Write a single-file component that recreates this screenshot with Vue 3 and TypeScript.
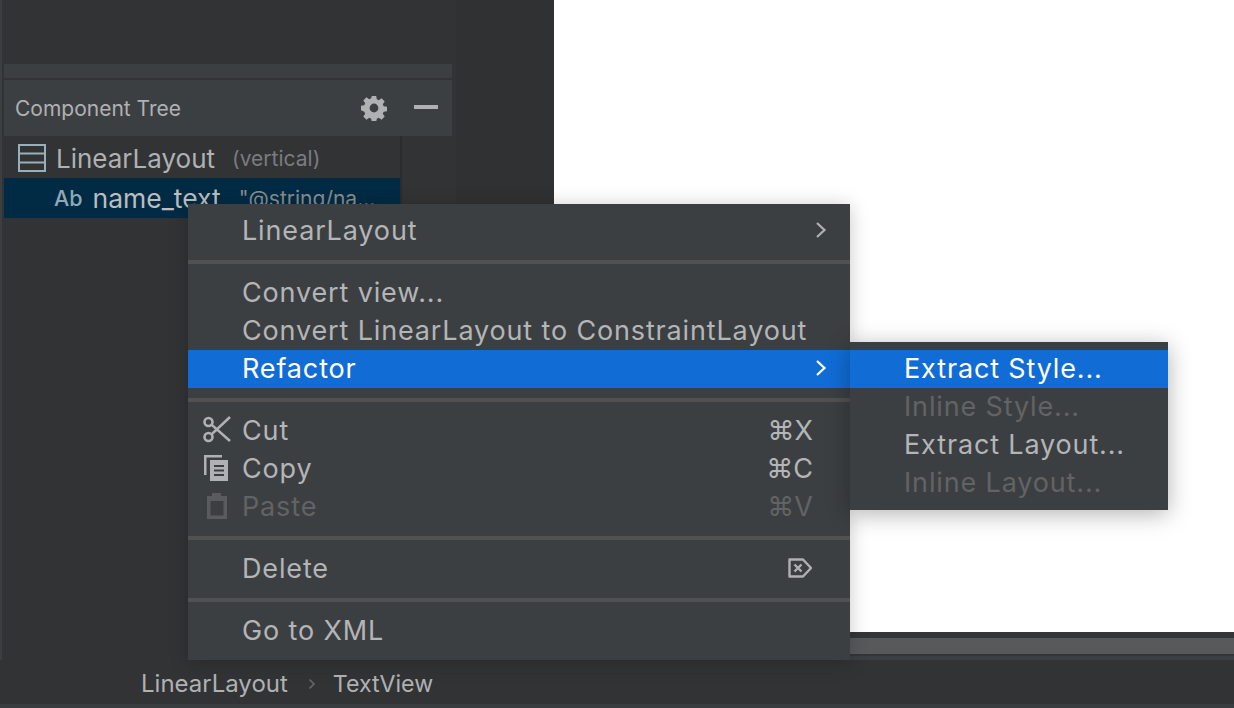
<script setup lang="ts">
interface Item { label?: string; sep?: boolean; sub?: boolean; active?: boolean; disabled?: boolean; icon?: string; key?: string; del?: boolean }
const items: Item[] = [
  { label: 'LinearLayout', sub: true },
  { sep: true },
  { label: 'Convert view...' },
  { label: 'Convert LinearLayout to ConstraintLayout' },
  { label: 'Refactor', sub: true, active: true },
  { sep: true },
  { label: 'Cut', icon: 'cut', key: '⌘X' },
  { label: 'Copy', icon: 'copy', key: '⌘C' },
  { label: 'Paste', icon: 'paste', key: '⌘V', disabled: true },
  { sep: true },
  { label: 'Delete', del: true },
  { sep: true },
  { label: 'Go to XML' },
]
const subItems: Item[] = [
  { label: 'Extract Style...', active: true },
  { label: 'Inline Style...', disabled: true },
  { label: 'Extract Layout...' },
  { label: 'Inline Layout...', disabled: true },
]
</script>

<template>
  <div class="app">
    <div class="main">
      <div class="left">
        <div class="strip"></div>
        <div class="header">
          <span class="title">Component Tree</span>
          <svg class="gear" width="26" height="26" viewBox="0 0 26 26">
            <path fill="#afb1b3" fill-rule="evenodd" d="M10.8 1h4.400l.6 3.300 2 .9 2.800-1.900 3.100 3.100-1.900 2.800.9 2 3.300.6v4.400l-3.300.6-.9 2 1.900 2.800-3.100 3.100-2.800-1.900-2 .9-.6 3.300h-4.400l-.6-3.300-2-.9-2.800 1.900-3.100-3.100 1.900-2.800-.9-2L0 15.200v-4.400l3.300-.6.9-2-1.900-2.800 3.100-3.100 2.800 1.900 2-.9zM13 8.600a4.400 4.400 0 1 0 0 8.800 4.400 4.400 0 0 0 0-8.800z" />
          </svg>
          <span class="minus"></span>
        </div>
        <div class="tree">
          <div class="row">
            <svg class="layout-icon" width="28" height="28" viewBox="0 0 28 28" fill="none" stroke="#9aafba" stroke-width="2">
              <rect x="1" y="1" width="26" height="26" />
              <path d="M1 9.500h26M1 18.500h26" />
            </svg>
            <span class="name">LinearLayout</span>
            <span class="hint">(vertical)</span>
          </div>
          <div class="row selected">
            <span class="ab">Ab</span>
            <span class="name">name_text</span>
            <span class="hint">"@string/na...</span>
          </div>
        </div>
      </div>
      <div class="right">
        <div class="canvas"></div>
        <div class="edge"></div>
        <div class="scrollbar"></div>
        <div class="edge2"></div>
      </div>
    </div>
    <div class="crumbs">
      <span>LinearLayout</span>
      <svg class="crumb-chev" width="10" height="14" viewBox="0 0 10 14" fill="none" stroke="#66686a" stroke-width="1.600"><path d="M2.500 2.500 7 7l-4.500 4.500" /></svg>
      <span class="crumb-last">TextView</span>
    </div>

    <div class="menu">
      <template v-for="(it, i) in items" :key="i">
        <div v-if="it.sep" class="sep"></div>
        <div v-else class="item" :class="{ active: it.active, disabled: it.disabled, low: i > 5 }">
          <svg v-if="it.icon === 'cut'" class="ico cut" width="28" height="28" viewBox="0 0 28 28" fill="none" stroke="#afb1b3" stroke-width="2.600">
            <circle cx="5.500" cy="7" r="4" />
            <circle cx="5.500" cy="22" r="4" />
            <path d="M8.500 9.600 27 26M8.500 19.400 27 2" />
          </svg>
          <svg v-if="it.icon === 'copy'" class="ico" width="28" height="28" viewBox="0 0 28 28">
            <path fill="#afb1b3" d="M1 1h18v2.500H3.500V21H1z" />
            <path fill="#afb1b3" fill-rule="evenodd" d="M7 6h18v21H7zM11 11v2h10v-2zM11 15.500v2h10v-2zM11 20v2h10v-2z" />
          </svg>
          <svg v-if="it.icon === 'paste'" class="ico" width="28" height="28" viewBox="0 0 28 28">
            <path fill="#5a5b5c" fill-rule="evenodd" d="M9 1h9v3h6v23H4V4h5zM7.500 9v14.500h13V9z" />
          </svg>
          <span class="label">{{ it.label }}</span>
          <span v-if="it.key" class="key">{{ it.key }}</span>
          <svg v-if="it.sub" class="chev" width="12" height="18" viewBox="0 0 12 18" fill="none" :stroke="it.active ? '#fff' : '#afb1b3'" stroke-width="2.200"><path d="M2 2l7.500 7L2 16" /></svg>
          <svg v-if="it.del" class="del" width="26" height="20" viewBox="0 0 26 20" fill="none" stroke="#afb1b3" stroke-width="2.400" stroke-linejoin="round">
            <path d="M2.500 1.500h13.500l8 8.500-8 8.500H2.500z" />
            <path d="M7.500 6.500l7 7M14.500 6.500l-7 7" />
          </svg>
        </div>
      </template>
    </div>

    <div class="submenu">
      <div v-for="s in subItems" :key="s.label" class="subitem" :class="{ active: s.active, disabled: s.disabled }">{{ s.label }}</div>
    </div>
  </div>
</template>

<style>
html, body { margin: 0; padding: 0; background: #323335; }
</style>

<style scoped>
.app {
  position: relative;
  width: 1234px;
  height: 708px;
  overflow: hidden;
  display: flex;
  flex-direction: column;
  background: #323335;
  font-family: Inter, "Liberation Sans", sans-serif;
  color: #afb1b3;
}
.main { display: flex; height: 660px; flex: none; }
.left {
  width: 554px;
  flex: none;
  box-sizing: border-box;
  padding: 64px 102px 0 2px;
  background: linear-gradient(90deg, #323335 0, #323335 454px, #2f3133 454px);
  border-left: 2px solid #3c3f41;
}
.strip { height: 14px; background: #3c3f41; margin-bottom: 2px; }
.header {
  height: 56px;
  background: #3c3f41;
  display: flex;
  align-items: center;
  box-sizing: border-box;
  padding: 0 14px 0 11px;
}
.title { font-size: 21px; flex: 1; color: #afb1b3; }
.gear { margin-right: 27px; }
.minus { width: 24px; height: 4px; background: #afb1b3; margin-bottom: 2px; }
.tree { width: 398px; height: 524px; box-sizing: border-box; border-right: 2px solid #2b2b2b; padding-top: 2px; }
.row {
  height: 40px;
  display: flex;
  align-items: center;
  box-sizing: border-box;
  white-space: nowrap;
  overflow: hidden;
}
.layout-icon { margin-left: 14px; margin-right: 10px; flex: none; }
.name { font-size: 26px; color: #afb1b3; margin-right: 17px; }
.hint { font-size: 21px; color: #7a7c7e; }
.selected { background: #012b44; }
.selected .name { color: #bbbdbf; margin-right: 18px; font-size: 26.500px; }
.selected .hint { color: #8a8c8e; }
.ab { font-size: 21.500px; font-weight: 500; color: #8fa8b5; margin-left: 50px; margin-right: 10px; }
.right { flex: 1; display: flex; flex-direction: column; }
.canvas { height: 632px; background: #fff; }
.edge { height: 6px; background: #333537; }
.scrollbar { height: 16px; background: #58595b; }
.edge2 { flex: 1; background: #3c3f41; border-top: 2px solid #333537; }
.crumbs {
  flex: 1;
  display: flex;
  align-items: center;
  padding: 3px 0 0 141px;
  font-size: 24px;
  background: #323335;
  border-bottom: 4px solid #3a3d3f;
  box-sizing: border-box;
  color: #afb1b3;
}
.crumb-chev { margin: 0 16px 0 19px; }
.crumb-last { font-size: 23.200px; }
.menu {
  position: absolute;
  left: 188px;
  top: 204px;
  width: 662px;
  height: 456px;
  box-sizing: border-box;
  padding-top: 8px;
  background: #3c3f41;
  box-shadow: 0 2px 18px rgba(0, 0, 0, 0.22);
  font-size: 27px;
  letter-spacing: 0.850px;
}
.sep { height: 4px; background: #515151; margin: 11px 0 9px; }
.sep:nth-child(2) { margin: 10px 0; }
.sep:nth-child(6) { margin: 10px 0 9px; }
.item {
  position: relative;
  height: 38px;
  display: flex;
  align-items: center;
  box-sizing: border-box;
  padding: 0 23px 2px 54px;
  color: #b3b5b7;
}
.item.low { padding-bottom: 0; }
.item .label { flex: 1; white-space: nowrap; }
.item.active { background: #116cd6; color: #fff; }
.item.disabled { color: #626364; }
.ico { position: absolute; left: 15px; top: 5px; }
.ico.cut { top: 4px; }
.key { letter-spacing: 0; margin-right: 14px; font-size: 27px; }
.del { margin-right: 14px; }
.submenu {
  position: absolute;
  left: 850px;
  top: 342px;
  width: 318px;
  height: 168px;
  box-sizing: border-box;
  padding-top: 8px;
  background: #3c3f41;
  box-shadow: 0 4px 22px rgba(0, 0, 0, 0.3);
  font-size: 27px;
  letter-spacing: 0.850px;
}
.subitem {
  height: 38px;
  line-height: 38px;
  padding-left: 54px;
  color: #b3b5b7;
  white-space: nowrap;
}
.subitem.active { background: #116cd6; color: #fff; }
.subitem.disabled { color: #626364; }
</style>
